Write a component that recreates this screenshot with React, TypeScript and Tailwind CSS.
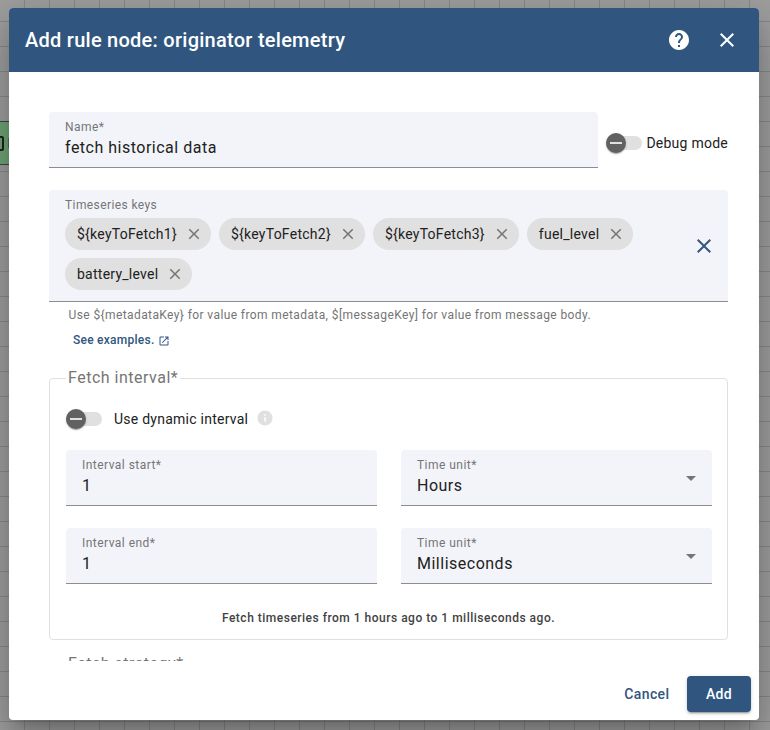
import type { ReactNode } from "react";
import { MdClose, MdHelp, MdInfo, MdOpenInNew } from "react-icons/md";

function Toggle() {
  return (
    <span className="relative flex h-5 w-9 shrink-0 items-center">
      <span className="h-3.5 w-9 rounded-full bg-[#e0e0e0]" />
      <span className="absolute left-0 top-0 flex size-5 items-center justify-center rounded-full bg-[#616161] shadow-[0_2px_1px_-1px_rgba(0,0,0,0.2),0_1px_1px_rgba(0,0,0,0.14),0_1px_3px_rgba(0,0,0,0.12)]">
        <span className="h-0.5 w-3 bg-[#e0e0e0]" />
      </span>
    </span>
  );
}

function Field({ label, value, select = false }: { label: string; value: string; select?: boolean }) {
  return (
    <div className="flex h-14 flex-1 items-center justify-between rounded-t-[4px] border-b border-[#8c8c91] bg-[#f3f4f9] px-4">
      <div className="flex flex-col">
        <span className="text-[12px] leading-[17px] tracking-[0.46px] text-[#757578]">{label}</span>
        <span className="text-[16px] leading-6 tracking-[0.5px] text-[#212121]">{value}</span>
      </div>
      {select && (
        <svg className="mt-0.5" width="10" height="5" viewBox="0 0 10 5" fill="#757575">
          <path d="M0 0h10L5 5z" />
        </svg>
      )}
    </div>
  );
}

function Chip({ children }: { children: ReactNode }) {
  return (
    <span className="flex h-8 items-center gap-2 rounded-full bg-[#e0e0e0] pl-3 pr-2 text-[14px] leading-5 tracking-[0.25px] text-[#212121]">
      {children}
      <MdClose className="size-[18px] text-[#757575]" />
    </span>
  );
}

const keys = ["${keyToFetch1}", "${keyToFetch2}", "${keyToFetch3}", "fuel_level", "battery_level"];

export default function App() {
  return (
    <div className="relative flex h-[730px] w-[770px] overflow-hidden bg-[#9f9f9f] bg-[linear-gradient(to_right,#898989_1px,transparent_1px),linear-gradient(to_bottom,#898989_1px,transparent_1px)] bg-[length:25px_25px] bg-[position:24px_21px] pl-[9px] pt-2 font-[Roboto,sans-serif]">
      <div className="absolute -left-5 top-[121px] h-11 w-12 border-y border-[#444] bg-[#6fa577]">
        <span className="absolute left-[10px] top-3.5 h-[15px] w-3.5 rounded-[2px] border-2 border-[#222]" />
        <span className="absolute left-7 top-4 h-2.5 w-2 bg-[#4c7552]" />
      </div>
      <div className="relative flex h-[712px] w-[750px] flex-col rounded-[4px] bg-white shadow-[0_11px_15px_-7px_rgba(0,0,0,0.2),0_24px_38px_3px_rgba(0,0,0,0.14),0_9px_46px_8px_rgba(0,0,0,0.12)]">
        <header className="flex h-16 shrink-0 items-center rounded-t-[4px] bg-[#305680] px-4 text-white">
          <h1 className="flex-1 text-[20px] font-medium leading-8 tracking-[0.26px]">Add rule node: originator telemetry</h1>
          <MdHelp className="mr-6 size-6" />
          <MdClose className="mr-1 size-6" />
        </header>

        <main className="h-[589px] overflow-hidden pl-10 pr-[31px] pt-10">
          <div className="flex items-center">
            <div className="flex w-[549px]">
              <Field label="Name*" value="fetch historical data" />
            </div>
            <div className="ml-2 flex items-center gap-1 pt-1.5 text-[14px] leading-5 tracking-[0.25px] text-[#212121]">
              <Toggle />
              <span className="whitespace-nowrap pl-[0.5px]">Debug mode</span>
            </div>
          </div>

          <div className="mt-[22px] flex h-28 items-center rounded-t-[4px] border-b border-[#8c8c91] bg-[#f3f4f9] pl-4 pr-3">
            <div className="flex flex-1 flex-col self-start pt-[7px]">
              <span className="text-[12px] leading-4 tracking-[0.4px] text-[#757578]">Timeseries keys</span>
              <div className="mt-[5px] flex flex-wrap gap-2">
                {keys.map((key) => (
                  <Chip key={key}>{key}</Chip>
                ))}
              </div>
            </div>
            <MdClose className="size-6 text-[#305680]" />
          </div>
          <p className="mt-[5px] pl-[19.5px] text-[12px] leading-4 tracking-[0.4px] text-[#757575]">
            {"Use ${metadataKey} for value from metadata, $[messageKey] for value from message body."}
          </p>
          <a className="mt-[9px] flex h-4 items-center gap-1 pl-6 text-[12px] font-medium leading-4 tracking-[0.25px] text-[#305680]">
            See examples.
            <MdOpenInNew className="mt-0.5 size-3" />
          </a>

          <fieldset className="mt-[18px] h-[274px] rounded-[4px] border border-[#e0e0e0] pl-4 pr-[15px]">
            <legend className="px-0.5 text-[16px] leading-6 tracking-[0.5px] text-[#757575]">Fetch interval*</legend>
            <div className="mt-[19px] flex h-5 items-center">
              <Toggle />
              <span className="ml-3 text-[14px] leading-5 tracking-[0.25px] text-[#212121]">Use dynamic interval</span>
              <MdInfo className="mb-0.5 ml-2 size-[18px] text-[#e0e0e0]" />
            </div>
            <div className="mt-[21px] flex gap-6">
              <Field label="Interval start*" value="1" />
              <Field label="Time unit*" value="Hours" select />
            </div>
            <div className="mt-[22px] flex gap-6">
              <Field label="Interval end*" value="1" />
              <Field label="Time unit*" value="Milliseconds" select />
            </div>
            <p className="mt-[26px] pr-px text-center text-[12px] font-medium leading-4 tracking-[0.5px] text-[#424242]">
              Fetch timeseries from 1 hours ago to 1 milliseconds ago.
            </p>
          </fieldset>
          <fieldset className="mt-3 h-32 rounded-[4px] border border-[#e0e0e0] px-4">
            <legend className="px-0.5 text-[16px] leading-6 tracking-[0.5px] text-[#757575]">Fetch strategy*</legend>
          </fieldset>
        </main>

        <footer className="flex items-center justify-end p-2 pt-[15px] text-[14px] font-medium leading-5 tracking-[0.3px]">
          <button className="h-9 px-[17.5px] tracking-[0.4px] text-[#305680]">Cancel</button>
          <button className="h-9 w-16 rounded-[4px] bg-[#305680] text-white shadow-[0_3px_1px_-2px_rgba(0,0,0,0.2),0_2px_2px_rgba(0,0,0,0.14),0_1px_5px_rgba(0,0,0,0.12)]">
            Add
          </button>
        </footer>
      </div>
    </div>
  );
}
